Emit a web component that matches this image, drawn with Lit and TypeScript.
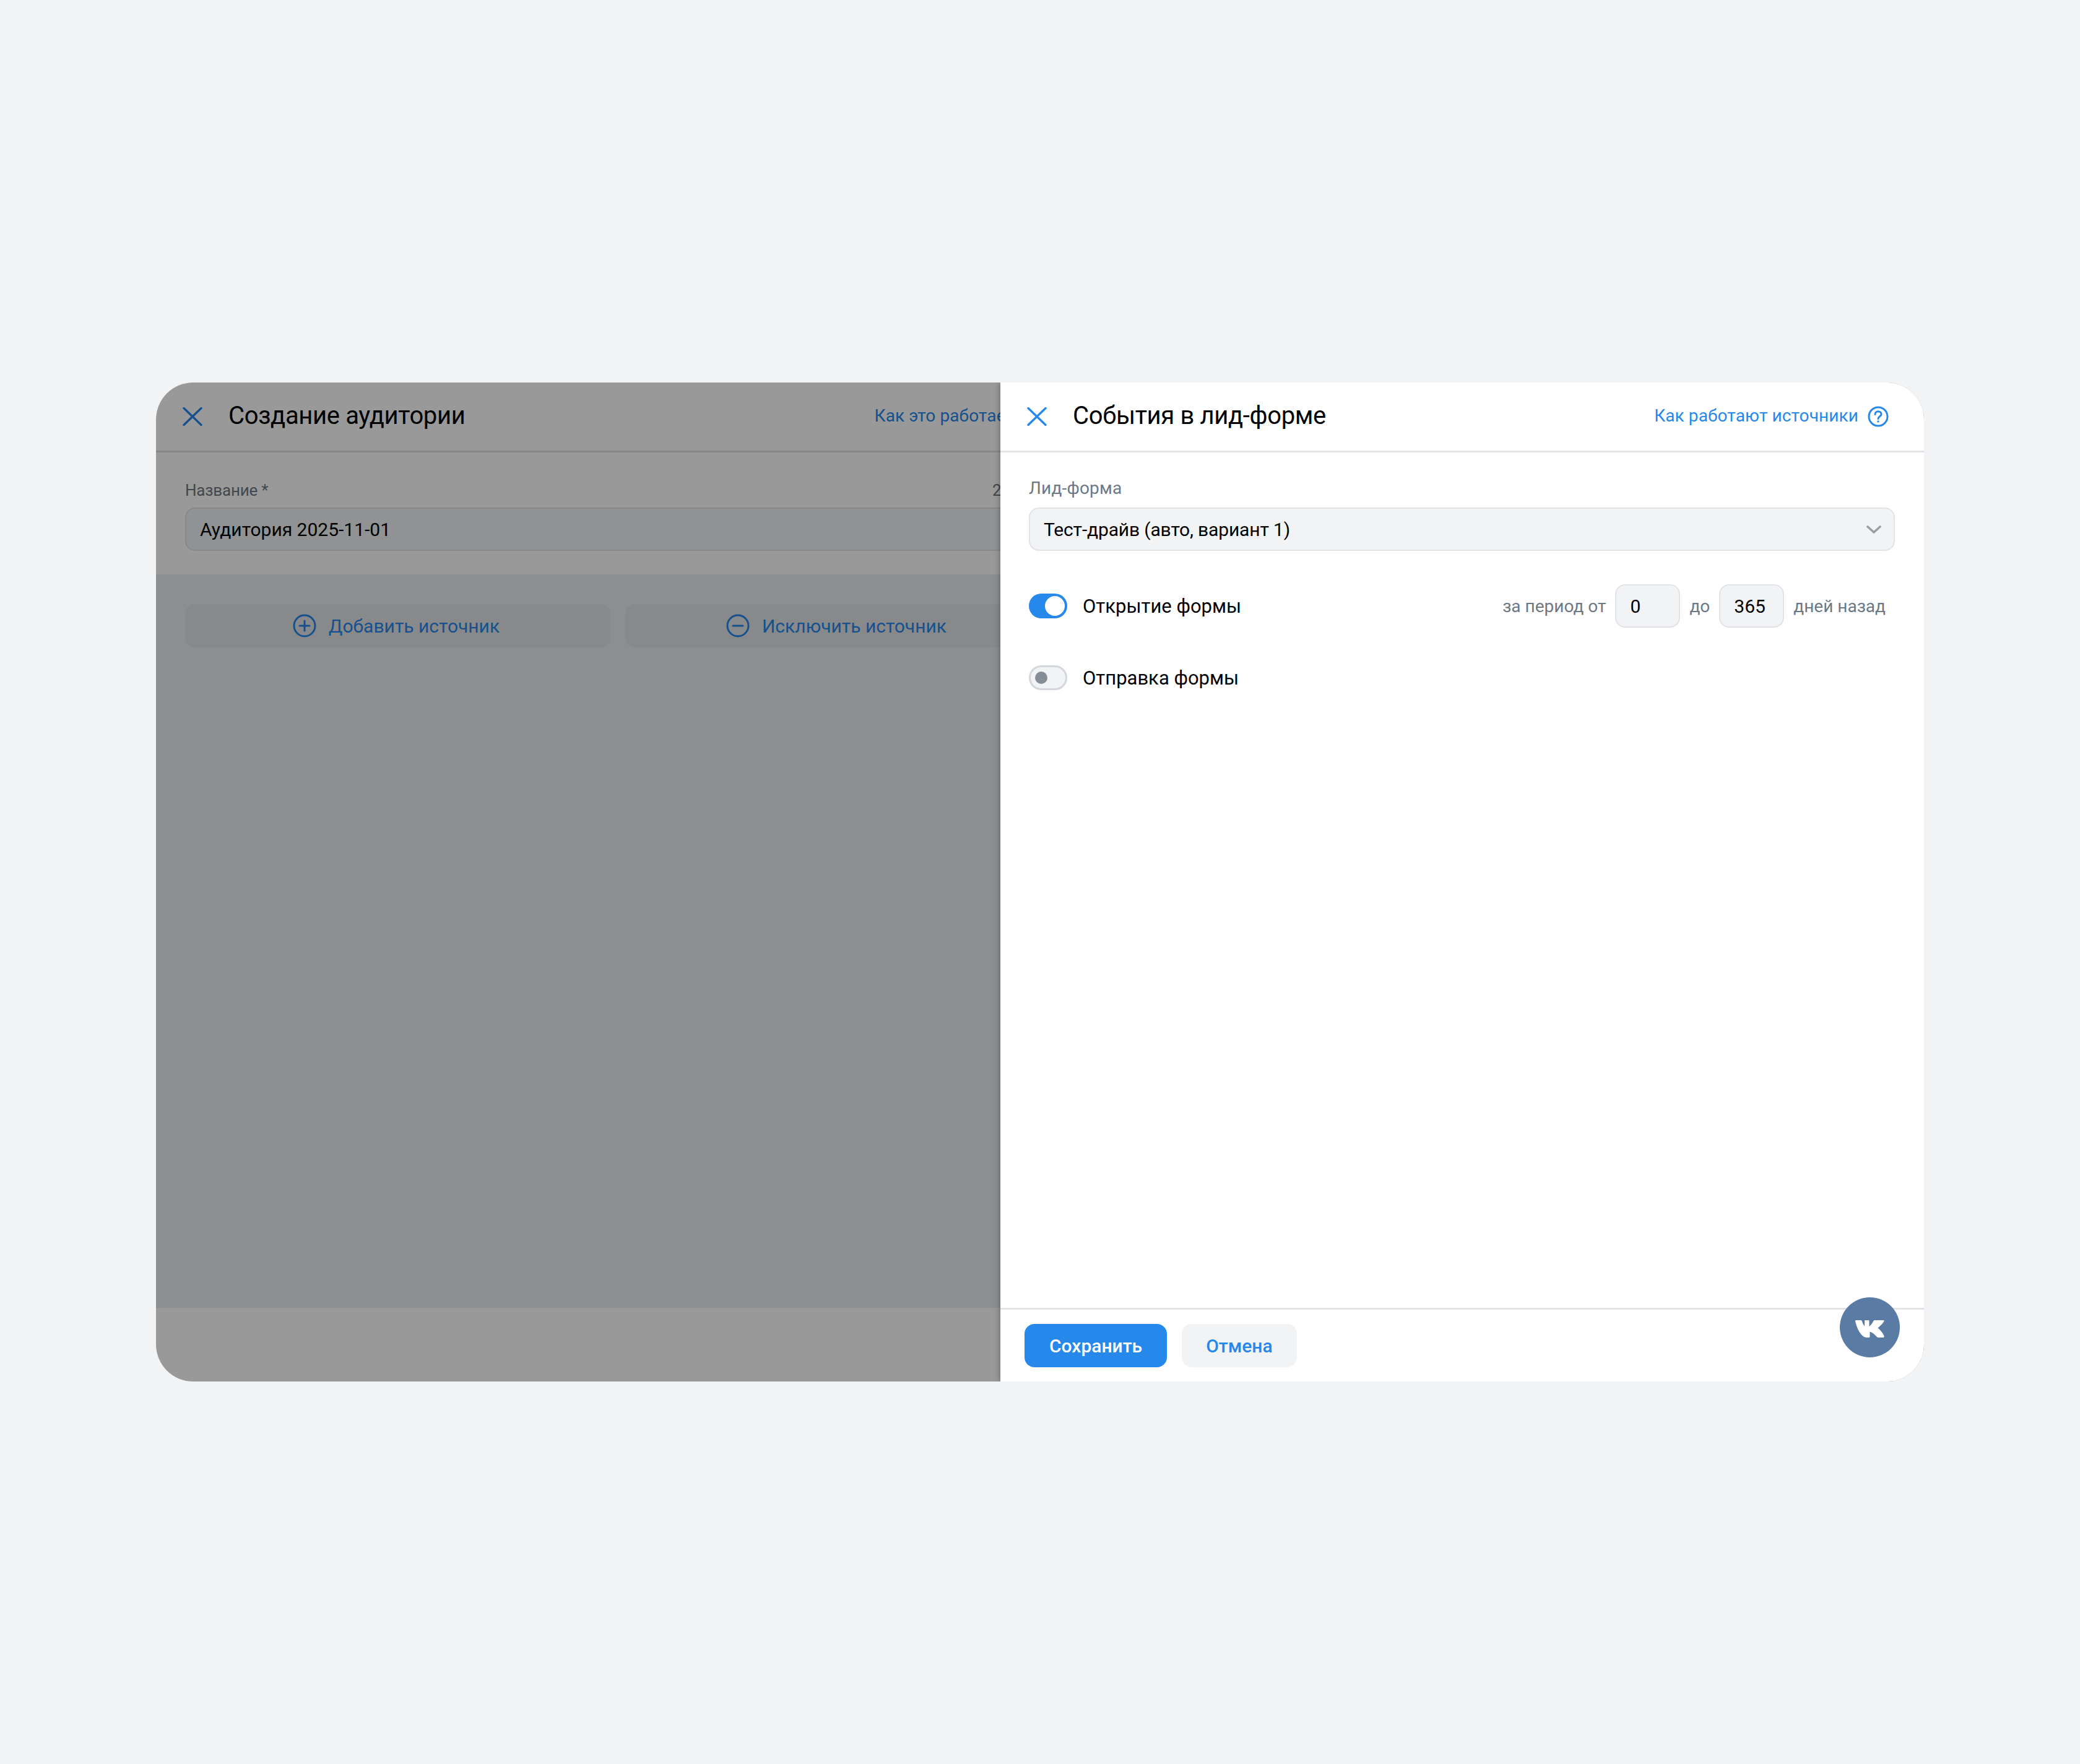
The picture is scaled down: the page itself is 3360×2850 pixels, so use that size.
import { LitElement, html, css, svg } from "lit";
import { customElement } from "lit/decorators.js";

const closeIcon = html`<svg class="close" viewBox="0 0 32 30" width="32" height="30" fill="none" stroke="currentColor" stroke-width="3.4" stroke-linecap="round"><path d="M2 1.5 30 28.5M30 1.5 2 28.5"/></svg>`;
const helpIcon = html`<svg viewBox="0 0 34 34" width="34" height="34" fill="none" stroke="currentColor" stroke-width="3" stroke-linecap="round"><circle cx="17" cy="17" r="15"/><path d="M12 13.500c0-2.900 2.200-4.800 5-4.800s5 1.800 5 4.300c0 3.800-5 3.700-5 7.600"/><circle cx="17" cy="25" r="1.100" fill="currentColor" stroke-width="1.200"/></svg>`;
const plusIcon = html`<svg viewBox="0 0 38 38" width="38" height="38" fill="none" stroke="currentColor" stroke-width="3" stroke-linecap="round"><circle cx="19" cy="19" r="17"/><path d="M19 11v16M11 19h16"/></svg>`;
const minusIcon = html`<svg viewBox="0 0 38 38" width="38" height="38" fill="none" stroke="currentColor" stroke-width="3" stroke-linecap="round"><circle cx="19" cy="19" r="17"/><path d="M11 19h16"/></svg>`;
const chevron = svg`<path d="M2 2 12 11 22 2" fill="none" stroke="#9a9ea3" stroke-width="3.600" stroke-linecap="round" stroke-linejoin="round"/>`;

@customElement("app-root")
export class AppRoot extends LitElement {
  static styles = css`
    :host {
      display: grid;
      place-items: center;
      min-height: 2850px;
      background: #f2f3f5;
      font-family: Roboto, "Liberation Sans", sans-serif;
      font-size: 30px;
      color: #000;
    }
    .card {
      position: relative;
      width: 2856px;
      height: 1614px;
      border-radius: 60px;
      overflow: hidden;
      background: #fff;
    }
    .panel {
      width: 1492px;
      height: 100%;
      display: flex;
      flex-direction: column;
      background: #fff;
    }
    .overlay {
      position: absolute;
      inset: 0;
      background: rgba(0, 0, 0, 0.4);
    }
    .top {
      position: absolute;
      top: 0;
      right: 0;
      bottom: 0;
      box-shadow: 0 0 10px rgba(0, 0, 0, 0.35);
    }
    .head {
      height: 110px;
      flex: none;
      display: flex;
      align-items: center;
      border-bottom: 3px solid #e1e3e6;
      padding: 0 57px 0 43px;
    }
    .close {
      color: #2688eb;
      margin-right: 42px;
      flex: none;
    }
    h1 {
      margin: 0 0 2px;
      font-size: 40px;
      font-weight: 450;
      letter-spacing: -0.35px;
      line-height: 48px;
      flex: 1;
    }
    .link {
      display: flex;
      align-items: center;
      gap: 15px;
      color: #2688eb;
      font-size: 28px;
      letter-spacing: 0.1px;
    }
    .link span {
      padding-bottom: 3px;
    }
    .name {
      padding: 43px 46px 38px 47px;
    }
    .labels {
      display: flex;
      justify-content: space-between;
      height: 36px;
      line-height: 36px;
      margin-bottom: 10px;
      font-size: 26px;
      letter-spacing: -0.2px;
      color: #6d7885;
    }
    .box {
      box-sizing: border-box;
      height: 70px;
      display: flex;
      align-items: center;
      background: #f2f3f5;
      border: 2px solid #e1e3e6;
      border-radius: 16px;
      padding: 0 22px;
      font-size: 30px;
    }
    .gray {
      flex: 1;
      background: #ebedf0;
      padding: 48px 47px;
    }
    .actions {
      display: grid;
      grid-template-columns: 687px 687px;
      gap: 24px;
    }
    .action {
      height: 70px;
      box-sizing: border-box;
      padding-right: 5px;
      border-radius: 16px;
      background: #e3e5e8;
      display: flex;
      align-items: center;
      justify-content: center;
      gap: 20px;
      color: #2688eb;
      font-size: 30px;
    }
    .foot {
      height: 119px;
      flex: none;
      box-sizing: border-box;
      background: #fff;
    }
    .body {
      flex: 1;
      padding: 40px 47px 0 46px;
      display: flex;
      flex-direction: column;
    }
    .body .label {
      height: 36px;
      line-height: 36px;
      margin-bottom: 13px;
      font-size: 28px;
      letter-spacing: 0.2px;
      color: #6d7885;
    }
    .select {
      justify-content: space-between;
      padding-right: 20px;
      letter-spacing: -0.15px;
    }
    .rows {
      display: flex;
      flex-direction: column;
      gap: 46px;
      margin-top: 54px;
    }
    .row {
      height: 70px;
      display: flex;
      align-items: center;
      font-size: 31px;
    }
    .toggle {
      position: relative;
      box-sizing: border-box;
      width: 62px;
      height: 40px;
      border-radius: 20px;
      margin-right: 25px;
      flex: none;
    }
    .toggle.on {
      background: #2688eb;
    }
    .toggle.off {
      background: #f2f3f5;
      border: 3px solid #d3d6db;
    }
    .knob {
      position: absolute;
      border-radius: 50%;
    }
    .on .knob {
      width: 32px;
      height: 32px;
      right: 4px;
      top: 4px;
      background: #fff;
    }
    .off .knob {
      width: 20px;
      height: 20px;
      left: 7px;
      top: 7px;
      background: #868d96;
    }
    .period {
      margin-left: auto;
      margin-right: 15px;
      display: flex;
      align-items: center;
      gap: 15px;
      font-size: 28px;
      color: #6d7885;
    }
    .num {
      width: 105px;
      color: #000;
    }
    .bar {
      height: 119px;
      flex: none;
      box-sizing: border-box;
      border-top: 3px solid #e1e3e6;
      padding: 23px 39px;
      display: flex;
      gap: 24px;
    }
    .btn {
      height: 70px;
      box-sizing: border-box;
      padding: 0 40px;
      border-radius: 16px;
      display: flex;
      align-items: center;
      font-size: 30px;
      font-weight: 500;
    }
    .save {
      background: #2688eb;
      color: #fff;
    }
    .cancel {
      background: #f2f3f5;
      color: #2688eb;
      padding: 0 39px;
    }
    .vk {
      position: absolute;
      right: 39px;
      bottom: 39px;
      width: 97px;
      height: 97px;
      border-radius: 50%;
      background: #5a7ba3;
      display: flex;
      align-items: center;
      justify-content: center;
    }
    .vk svg {
      margin-top: 4px;
    }
  `;

  render() {
    return html`
      <div class="card">
        <div class="panel">
          <div class="head">
            ${closeIcon}
            <h1>Создание аудитории</h1>
            <div class="link"><span>Как это работает</span> ${helpIcon}</div>
          </div>
          <div class="name">
            <div class="labels"><span>Название *</span><span>20 / 100</span></div>
            <div class="box">Аудитория 2025-11-01</div>
          </div>
          <div class="gray">
            <div class="actions">
              <div class="action">${plusIcon}Добавить источник</div>
              <div class="action">${minusIcon}Исключить источник</div>
            </div>
          </div>
          <div class="foot"></div>
        </div>
        <div class="overlay"></div>
        <div class="panel top">
          <div class="head">
            ${closeIcon}
            <h1>События в лид-форме</h1>
            <div class="link"><span>Как работают источники</span> ${helpIcon}</div>
          </div>
          <div class="body">
            <div class="label">Лид-форма</div>
            <div class="box select">
              <span>Тест-драйв (авто, вариант 1)</span>
              <svg viewBox="0 0 24 13" width="24" height="13">${chevron}</svg>
            </div>
            <div class="rows">
              <div class="row">
                <div class="toggle on"><div class="knob"></div></div>
                <span>Открытие формы</span>
                <div class="period">
                  <span>за период от</span>
                  <div class="box num">0</div>
                  <span>до</span>
                  <div class="box num">365</div>
                  <span>дней назад</span>
                </div>
              </div>
              <div class="row">
                <div class="toggle off"><div class="knob"></div></div>
                <span>Отправка формы</span>
              </div>
            </div>
          </div>
          <div class="bar">
            <div class="btn save">Сохранить</div>
            <div class="btn cancel">Отмена</div>
          </div>
        </div>
        <div class="vk">
          <svg viewBox="0 0 47 28" width="47" height="28">
            <path fill="#fff" d="M.8 0H9C9.800 0 10.400.4 10.700 1.200 12 5 13.500 8.200 15 9.500V1.500C15 .5 15.500 0 16.500 0H21C22 0 22.500.5 22.500 1.500V10C24.500 9 27 5.500 29.500 1 30 .3 30.500 0 31.300 0H45C46.500 0 46.800.7 46.400 1.800 44.500 5.500 40 9.500 36.500 12.500 40 15.500 44 20 46.400 25 47 27 46.200 28 45 28H37C36 28 35.400 27.600 34.500 26.600 31.500 23 27 19.500 23.500 18.500V26C23.500 27.400 22.800 28 21.500 28H19C10 28 3 15 0 1.500-.1.5.2 0 .8 0Z"/>
          </svg>
        </div>
      </div>
    `;
  }
}
